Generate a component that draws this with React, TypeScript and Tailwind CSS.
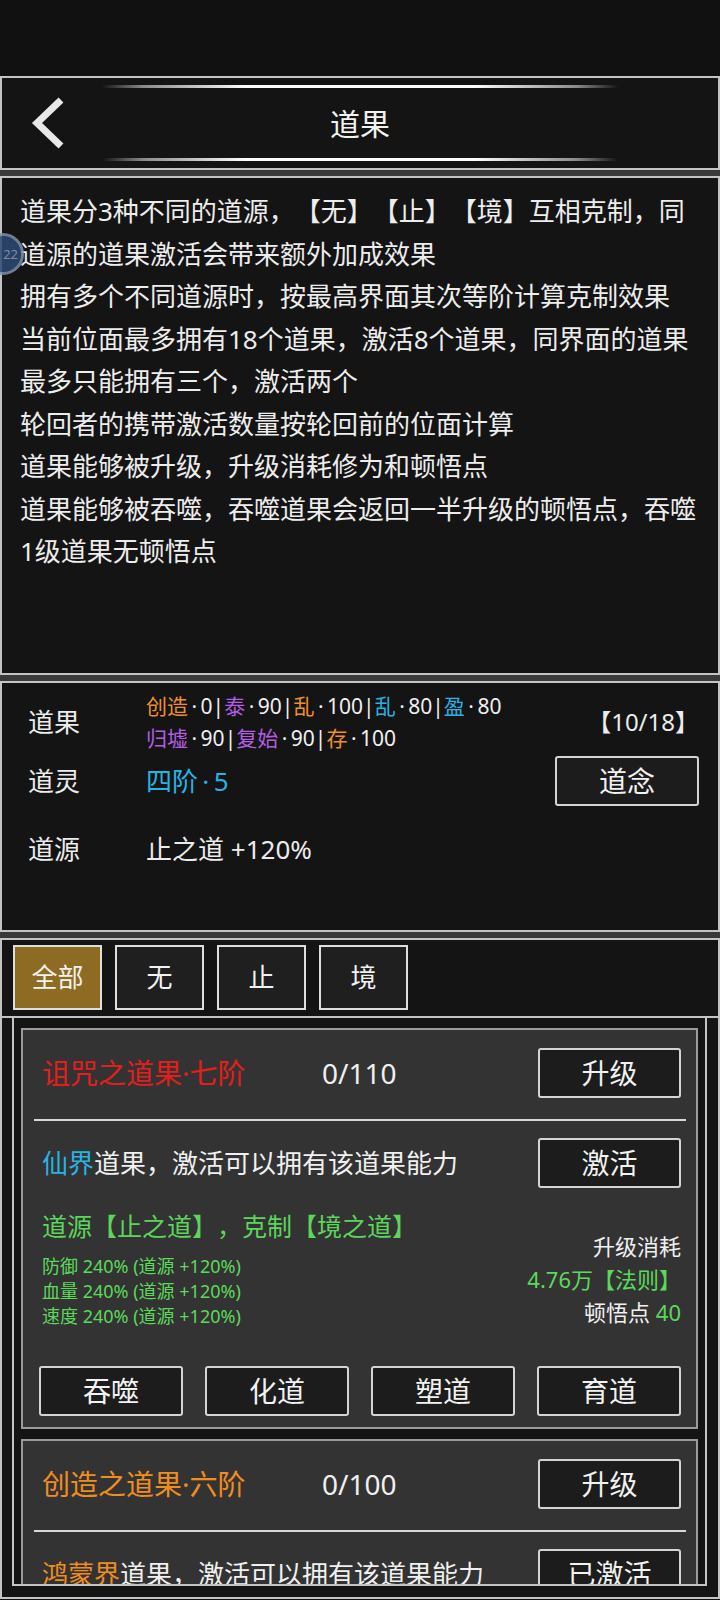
import React from 'react';

// Fenêtre « 道果 » : en-tête, règles, résumé, onglets et liste des cartes
const Btn: React.FC<{ children: React.ReactNode; className?: string }> = ({ children, className = '' }) => (
  <button
    className={`flex h-[50px] items-center justify-center rounded-[3px] border-2 border-[#d4d4d4] bg-[#1c1c1c] text-[28px] text-[#f2f2f2] ${className}`}
  >
    {children}
  </button>
);

type Fruit = {
  title: string;
  titleColor: string;
  progress: string;
  realm: string;
  realmColor: string;
  action: string;
};

const fruits: Fruit[] = [
  { title: '诅咒之道果·七阶', titleColor: 'text-[#e41d1d]', progress: '0/110', realm: '仙界', realmColor: 'text-[#2ab2e2]', action: '激活' },
  { title: '创造之道果·六阶', titleColor: 'text-[#f08d1f]', progress: '0/100', realm: '鸿蒙界', realmColor: 'text-[#f08d1f]', action: '已激活' },
];

const stats = ['防御', '血量', '速度'];

// point médian entouré d'espaces fines
const D = '\u2009·\u2009';

const FruitCard: React.FC<{ fruit: Fruit }> = ({ fruit }) => (
  <div className="shrink-0 border-2 border-[#9a9a9a] bg-[#333333] pt-[18px] pr-[15px] pb-[11px] pl-[16px]">
    {/* Titre et progression */}
    <div className="flex h-[50px] items-center">
      <div className={`w-[283px] pl-[3px] text-[28px] ${fruit.titleColor}`}>{fruit.title}</div>
      <div className="flex-1 text-[28px] text-[#f0f0f0]">{fruit.progress}</div>
      <Btn className="w-[143px]">升级</Btn>
    </div>

    <div className="mx-[-5px] mt-[21px] h-[2px] bg-[#d8d8d8]" />

    {/* Activation */}
    <div className="mt-[17px] flex h-[50px] items-center">
      <div className="flex-1 pl-[3px] text-[26px] text-[#f0f0f0]">
        <span className={fruit.realmColor}>{fruit.realm}</span>道果，激活可以拥有该道果能力
      </div>
      <Btn className="w-[143px]">{fruit.action}</Btn>
    </div>

    {/* Bonus et coût */}
    <div className="mt-[23px] flex items-end justify-between pl-[3px]">
      <div>
        <div className="text-[25px] leading-[30px] text-[#5bd65b]">道源【止之道】，克制【境之道】</div>
        <div className="mt-[13px] text-[18px] leading-[25px] text-[#5bd95b]">
          {stats.map((s) => (
            <div key={s}>{s} 240% (道源 +120%)</div>
          ))}
        </div>
      </div>
      <div className="text-right text-[22px] leading-[33px] text-[#f0f0f0]">
        <div>升级消耗</div>
        <div className="text-[#5bd95b]">4.76万【法则】</div>
        <div>
          顿悟点 <span className="text-[#5bd95b]">40</span>
        </div>
      </div>
    </div>

    {/* Actions */}
    <div className="mt-[37px] grid grid-cols-4 gap-[22px]">
      <Btn>吞噬</Btn>
      <Btn>化道</Btn>
      <Btn>塑道</Btn>
      <Btn>育道</Btn>
    </div>
  </div>
);

export default function App() {
  return (
    <div className="h-[1600px] w-[720px] overflow-hidden bg-[#111111] font-['Noto_Sans','Noto_Sans_CJK_SC',sans-serif] text-[#ececec] [text-spacing-trim:space-all]">
      <div className="h-[76px]" />

      {/* En-tête */}
      <div className="grid h-[94px] grid-cols-[100px_1fr_100px] border-2 border-[#c4c4c4] bg-[#141414]">
        <div className="flex items-center pl-[26px]">
          <svg width="40" height="56" viewBox="0 0 40 56">
            <polyline points="33,5 9,28 33,51" fill="none" stroke="#e8e8e8" strokeWidth="7" strokeLinejoin="miter" />
          </svg>
        </div>
        <div className="flex flex-col pt-[7px] pb-[7px]">
          <div className="h-[3px] bg-[linear-gradient(90deg,transparent,#8a8a8a_8%,#ffffff_28%,#ffffff_72%,#8a8a8a_92%,transparent)]" />
          <div className="flex flex-1 items-center justify-center text-[30px] text-[#f2f2f2]">道果</div>
          <div className="h-[3px] bg-[linear-gradient(90deg,transparent,#8a8a8a_8%,#ffffff_28%,#ffffff_72%,#8a8a8a_92%,transparent)]" />
        </div>
        <div />
      </div>

      <div className="h-[6px] bg-[#3a3a3a]" />

      {/* Règles */}
      <div className="relative h-[499px] border-2 border-[#c4c4c4] bg-[#141414] pt-[12px] pl-[18px] text-[26px] leading-[42.5px] text-[#ededed]">
        <div className="whitespace-nowrap">道果分3种不同的道源，【无】【止】【境】互相克制，同</div>
        <div>道源的道果激活会带来额外加成效果</div>
        <div>拥有多个不同道源时，按最高界面其次等阶计算克制效果</div>
        <div className="whitespace-nowrap">当前位面最多拥有18个道果，激活8个道果，同界面的道果</div>
        <div>最多只能拥有三个，激活两个</div>
        <div>轮回者的携带激活数量按轮回前的位面计算</div>
        <div>道果能够被升级，升级消耗修为和顿悟点</div>
        <div className="whitespace-nowrap">道果能够被吞噬，吞噬道果会返回一半升级的顿悟点，吞噬</div>
        <div>1级道果无顿悟点</div>

        {/* Bulle flottante */}
        <div className="absolute top-[55px] left-[-20px] flex h-[42px] w-[42px] items-center justify-end rounded-full border-[3px] border-[#7f90a8] bg-[#2d4a72] pr-[3px] text-[13px] leading-none text-[#8ea2bc] opacity-85">
          22
        </div>
      </div>

      <div className="h-[6px] bg-[#3a3a3a]" />

      {/* Résumé */}
      <div className="h-[251px] border-2 border-[#c4c4c4] bg-[#141414] pt-[7px] pr-[19px] pl-[26px]">
        <div className="flex h-[64px] items-center">
          <div className="w-[118px] text-[26px]">道果</div>
          <div className="flex-1 whitespace-nowrap text-[21px] leading-[32px] text-[#f0f0f0]">
            <div>
              <span className="text-[#f0902a]">创造</span>{D}0|<span className="text-[#b25ee0]">泰</span>{D}90|
              <span className="text-[#f0902a]">乱</span>{D}100|<span className="text-[#2ab2e2]">乱</span>{D}80|
              <span className="text-[#2ab2e2]">盈</span>{D}80
            </div>
            <div>
              <span className="text-[#b25ee0]">归墟</span>{D}90|<span className="text-[#b25ee0]">复始</span>{D}90|
              <span className="text-[#f0902a]">存</span>{D}100
            </div>
          </div>
          <div className="text-[24px]">【10/18】</div>
        </div>

        <div className="mt-[2px] flex h-[50px] items-center">
          <div className="w-[118px] text-[26px]">道灵</div>
          <div className="flex-1 text-[26px] text-[#2ab2e2]">四阶{D}5</div>
          <Btn className="w-[144px]">道念</Btn>
        </div>

        <div className="mt-[23px] flex h-[40px] items-center">
          <div className="w-[118px] text-[26px]">道源</div>
          <div className="text-[26px]">止之道 +120%</div>
        </div>
      </div>

      <div className="h-[6px] bg-[#3a3a3a]" />

      {/* Onglets et liste */}
      <div className="border-2 border-[#c4c4c4] bg-[#141414]">
        <div className="flex gap-[13px] pt-[5px] pb-[6px] pl-[11px]">
          {['全部', '无', '止', '境'].map((t, i) => (
            <div
              key={t}
              className={`flex h-[65px] w-[89px] items-center justify-center border-2 border-[#dedede] text-[26px] text-[#f2f2f2] ${
                i === 0 ? 'bg-[#8e6b22]' : 'bg-[#1f1f1f]'
              }`}
            >
              {t}
            </div>
          ))}
        </div>

        <div className="border-t-2 border-[#c4c4c4] pr-[11px] pb-[11px] pl-[10px]">
          <div className="flex h-[568px] flex-col gap-[10px] overflow-hidden border-x-2 border-b-2 border-[#c4c4c4] px-[7px] pt-[10px]">
            {fruits.map((f) => (
              <FruitCard key={f.title} fruit={f} />
            ))}
          </div>
        </div>
      </div>
    </div>
  );
}
